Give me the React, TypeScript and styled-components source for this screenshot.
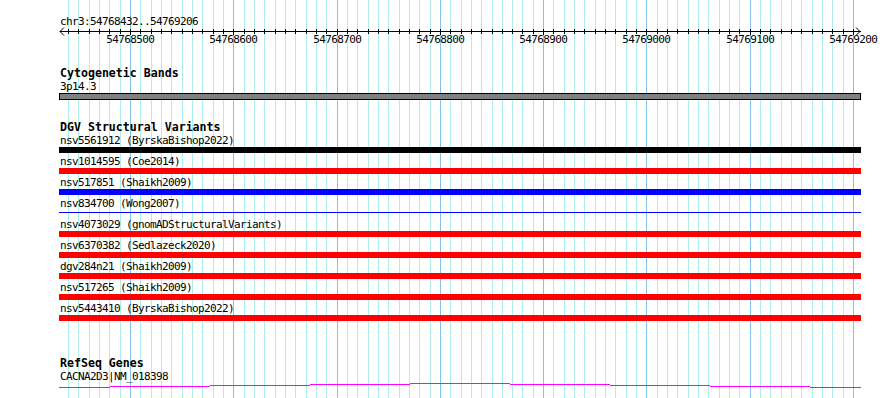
import React from "react";
import styled, { createGlobalStyle } from "styled-components";

const GlobalStyle = createGlobalStyle`
  html, body {
    margin: 0;
    padding: 0;
    background: #ffffff;
  }
`;

const START = 54768432;
const END = 54769206;
const toX = (pos: number) => Math.round(130 + (pos - 54768500) * 1.03286);

const gridPositions: number[] = [];
for (let p = 54768440; p <= 54769200; p += 10) gridPositions.push(p);

const variants = [
  { name: "nsv5561912 (ByrskaBishop2022)", color: "#000000" },
  { name: "nsv1014595 (Coe2014)", color: "#ff0000" },
  { name: "nsv517851 (Shaikh2009)", color: "#0000ff" },
  { name: "nsv834700 (Wong2007)", color: "#0000ff", thin: true },
  { name: "nsv4073029 (gnomADStructuralVariants)", color: "#ff0000" },
  { name: "nsv6370382 (Sedlazeck2020)", color: "#ff0000" },
  { name: "dgv284n21 (Shaikh2009)", color: "#ff0000" },
  { name: "nsv517265 (Shaikh2009)", color: "#ff0000" },
  { name: "nsv5443410 (ByrskaBishop2022)", color: "#ff0000" },
];

// intron "hat" drawn as stepped segments: [x0, x1, y]
const hatSteps: [number, number, number][] = [
  [59, 110, 4],
  [110, 210, 3],
  [210, 310, 2],
  [310, 410, 1],
  [410, 510, 0],
  [510, 610, 1],
  [610, 710, 2],
  [710, 810, 3],
  [810, 861, 4],
];

const App = () => {
  return (
    <>
      <GlobalStyle />
      <SPanel>
        <SGrid width={890} height={398} shapeRendering="crispEdges">
          {gridPositions.map(p => (
            <line
              key={p}
              x1={toX(p) + 0.5}
              x2={toX(p) + 0.5}
              y1={0}
              y2={398}
              stroke={p % 100 === 0 ? "#84c4ec" : "#aeeeee"}
              strokeWidth={1}
            />
          ))}
        </SGrid>

        <SContent>
          <SRuler>
            <SText>
              chr3:{START}..{END}
            </SText>
            <SRulerSvg width={802} height={18} shapeRendering="crispEdges">
              <line x1={1} x2={802} y1={3.5} y2={3.5} stroke="#000" />
              <polyline points="5,-0.5 1,3.5 5,7.5" fill="none" stroke="#000" shapeRendering="auto" />
              <polyline points="797,-0.5 801,3.5 797,7.5" fill="none" stroke="#000" shapeRendering="auto" />
              {gridPositions.map(p => (
                <line
                  key={p}
                  x1={toX(p) - 59 + 0.5}
                  x2={toX(p) - 59 + 0.5}
                  y1={1}
                  y2={p % 100 === 0 ? 7 : 6}
                  stroke="#000"
                />
              ))}
              {gridPositions
                .filter(p => p % 100 === 0)
                .map(p => (
                  <SRulerLabel key={p} x={toX(p) - 59 + 0.3} y={15} textAnchor="middle">
                    {p}
                  </SRulerLabel>
                ))}
            </SRulerSvg>
          </SRuler>

          <STrack $gap={20}>
            <STrackTitle>Cytogenetic Bands</STrackTitle>
            <SText>3p14.3</SText>
            <SBandBar />
          </STrack>

          <STrack $gap={20}>
            <STrackTitle>DGV Structural Variants</STrackTitle>
            {variants.map(v => (
              <SRow key={v.name}>
                <SText>{v.name}</SText>
                <SBar $color={v.color} $thin={v.thin} />
              </SRow>
            ))}
          </STrack>

          <STrack $gap={33}>
            <STrackTitle>RefSeq Genes</STrackTitle>
            <SText>CACNA2D3|NM_018398</SText>
            <SGene width={802} height={6} shapeRendering="crispEdges">
              {hatSteps.map(([x0, x1, y]) => (
                <rect key={x0} x={x0 - 59} y={y} width={x1 - x0} height={1} fill="#ff00ff" />
              ))}
            </SGene>
          </STrack>
        </SContent>
      </SPanel>
    </>
  );
};

export default App;

const SPanel = styled.div`
  position: relative;
  width: 890px;
  height: 398px;
  overflow: hidden;
  box-sizing: border-box;
  padding-left: 60px;
  background: #ffffff;
  color: #000000;
  font-family: "DejaVu Sans Mono", "Liberation Mono", monospace;
`;

const SGrid = styled.svg`
  position: absolute;
  left: 0;
  top: 0;
  z-index: 0;
`;

const SContent = styled.div`
  position: relative;
  z-index: 1;
  display: flex;
  flex-direction: column;
`;

const SRuler = styled.div`
  display: flex;
  flex-direction: column;
  padding-top: 15px;
`;

const SText = styled.div`
  font-size: 11px;
  letter-spacing: -0.62px;
  line-height: 13px;
  height: 13px;
  white-space: nowrap;
`;

const SRulerSvg = styled.svg`
  display: block;
  margin-left: -1px;
  overflow: visible;
`;

const SRulerLabel = styled.text`
  font-family: "DejaVu Sans Mono", "Liberation Mono", monospace;
  font-size: 11px;
  letter-spacing: -0.62px;
  fill: #000000;
`;

const STrack = styled.section<{ $gap: number }>`
  display: flex;
  flex-direction: column;
  margin-top: ${props => props.$gap}px;
`;

const STrackTitle = styled.div`
  font-size: 11.6px;
  font-weight: bold;
  line-height: 14px;
  height: 14px;
  white-space: nowrap;
`;

const SBandBar = styled.div`
  margin-left: -1px;
  width: 802px;
  height: 7px;
  box-sizing: border-box;
  border: 1px solid #000000;
  background: #808080;
`;

const SRow = styled.div`
  display: flex;
  flex-direction: column;
`;

const SBar = styled.div<{ $color: string; $thin?: boolean }>`
  margin-left: -1px;
  width: 802px;
  height: ${props => (props.$thin ? 1 : 6)}px;
  margin-top: ${props => (props.$thin ? 2 : 0)}px;
  margin-bottom: ${props => (props.$thin ? 5 : 2)}px;
  background: ${props => props.$color};
`;

const SGene = styled.svg`
  display: block;
  margin-left: -1px;
`;
